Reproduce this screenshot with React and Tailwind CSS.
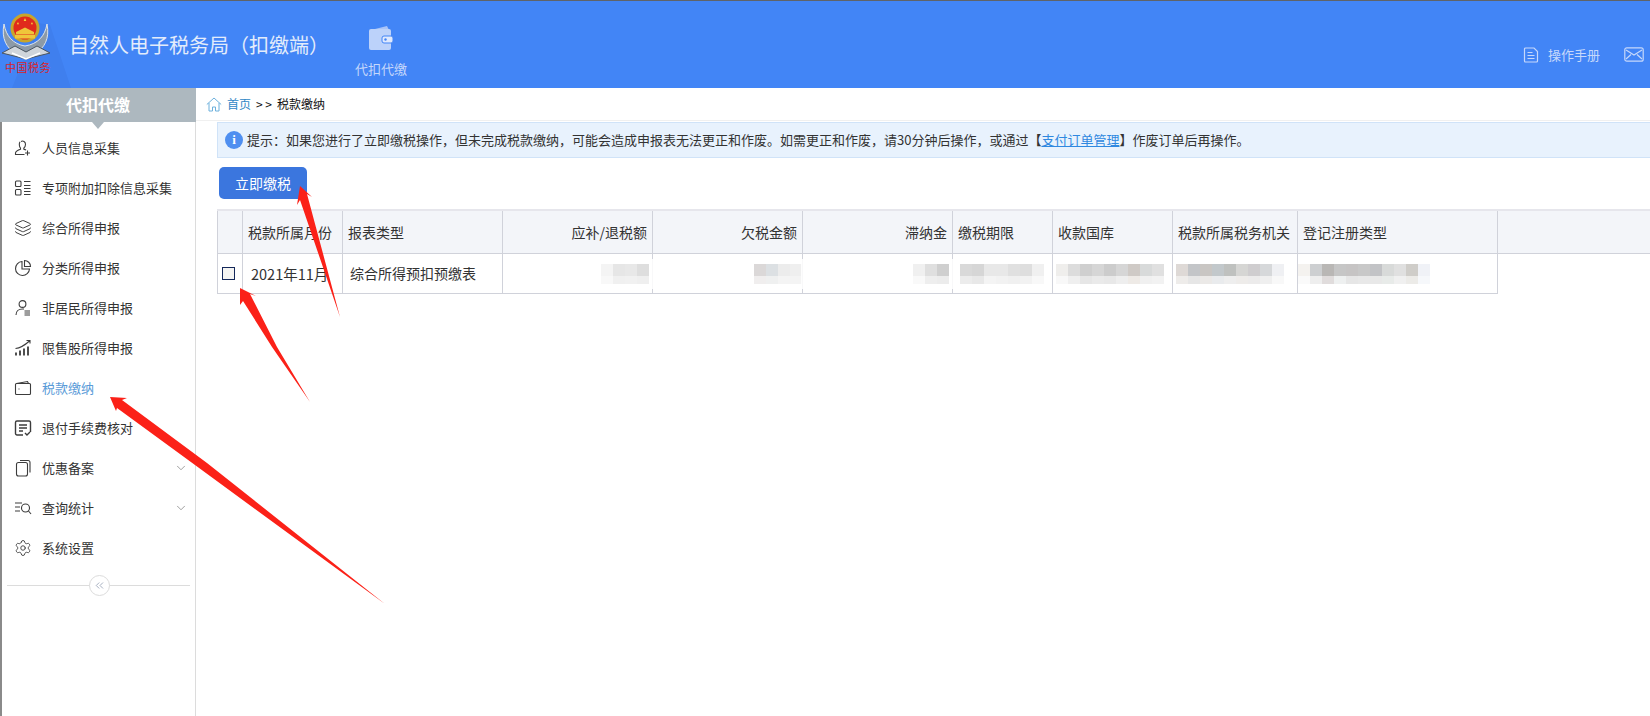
import React from 'react';
import { ChevronDown, ChevronsLeft, Settings, Layers } from 'lucide-react';

const ic = { width: 18, height: 18, viewBox: '0 0 18 18', fill: 'none', stroke: '#3c3c3c', strokeWidth: 1.1 };

const UserAdd = () => (
  <svg {...ic}>
    <path d="M7 2.500c2-1.200 4.500 0 4.500 2.800 0 1.600-.7 3-1.700 3.800v1c1 .3 1.700.6 2.200 1M6 2.800C5 4 5 7.500 6.500 9.100v1.200c-2.500.8-4.500 1.800-5 3.500v1.700h9" />
    <path d="M13.500 11.500v5M11 14h5" />
  </svg>
);
const ListGrid = () => (
  <svg {...ic}>
    <rect x="1.500" y="2" width="5.500" height="5.500" rx="1" />
    <rect x="1.500" y="10.500" width="5.500" height="5.500" rx="1" />
    <path d="M10 2.500h6.500M10 6.500h6.500M10 9.500h6.500M10 12.500h6.500M10 15.500h6.500" />
  </svg>
);
const Pie = () => (
  <svg {...ic}>
    <path d="M8 2.500a7 7 0 1 0 7.500 7.500H8z" />
    <path d="M10.500 1.500a6 6 0 0 1 6 6h-6z" />
  </svg>
);
const UserList = () => (
  <svg {...ic}>
    <circle cx="8.500" cy="5" r="3.400" />
    <path d="M2 16c0-3.500 2.500-6 6.500-6h1.500M10.500 12h5.500M10.500 14h5.500M10.500 16h5.500" />
  </svg>
);
const Bars = () => (
  <svg {...ic}>
    <path d="M2 16.500v-3M6 16.500v-5M10 16.500v-7M14 16.500v-9" strokeWidth="1.800" />
    <path d="M1.500 9.500C6 9 11 6 15.500 2M12.500 1.500h3.500v3" />
  </svg>
);
const Wallet = () => (
  <svg {...ic}>
    <path d="M2.500 4.500l11-2 1 2" />
    <rect x="1.500" y="4.500" width="15" height="11" rx="1" />
    <path d="M4.500 10h1" />
  </svg>
);
const Refund = () => (
  <svg {...ic}>
    <path d="M9 16H3a1.500 1.500 0 0 1-1.500-1.500v-11A1.500 1.500 0 0 1 3 2h12a1.500 1.500 0 0 1 1.500 1.500V13" strokeWidth="1.400" />
    <path d="M5 6h8M5 9h8M5 12h4" strokeWidth="1.400" />
    <path d="M11 14l2 2 3-3" strokeWidth="1.400" />
  </svg>
);
const Pages = () => (
  <svg {...ic}>
    <rect x="2.500" y="3.500" width="11" height="13.500" rx="2" />
    <path d="M6 1.500h8a2 2 0 0 1 2 2v10" />
  </svg>
);
const QueryList = () => (
  <svg {...ic}>
    <path d="M1 4h7M1 8h5M1 12h5" />
    <circle cx="11.500" cy="9" r="4" />
    <path d="M14.500 12l2.500 3" />
  </svg>
);

const menu = [
  { label: '人员信息采集', icon: <UserAdd /> },
  { label: '专项附加扣除信息采集', icon: <ListGrid /> },
  { label: '综合所得申报', icon: <Layers size={18} strokeWidth={1.3} color="#3c3c3c" /> },
  { label: '分类所得申报', icon: <Pie /> },
  { label: '非居民所得申报', icon: <UserList /> },
  { label: '限售股所得申报', icon: <Bars /> },
  { label: '税款缴纳', icon: <Wallet />, active: true },
  { label: '退付手续费核对', icon: <Refund /> },
  { label: '优惠备案', icon: <Pages />, more: true },
  { label: '查询统计', icon: <QueryList />, more: true },
  { label: '系统设置', icon: <Settings size={18} strokeWidth={1.2} color="#3c3c3c" /> },
];

const Logo = () => (
  <div className="relative w-[62px] h-[87px] shrink-0">
    {/* darker wedge behind the badge */}
    <svg className="absolute left-0 top-0" width="74" height="87" viewBox="0 0 74 87">
      <path d="M38 22L50 24 71 87H12z" fill="#3f7fee" />
    </svg>
    <svg className="absolute left-[1px] top-[11px]" width="50" height="50" viewBox="0 0 50 50">
      <path d="M3 12C0 27 6 36 14 41l10 6 11-6c8-5 14-14 11-29-2 12-9 20-22 22C12 32 5 24 3 12z" fill="#8c9aa8" stroke="#dfe5ea" strokeWidth="1" />
      <path d="M1 41l13-7 11 6 11-6 13 7-24 6z" fill="#cfd5db" stroke="#4a5560" strokeWidth="1" />
      <path d="M11 41l14 6 14-6" fill="none" stroke="#fff" strokeWidth="1.600" />
      <circle cx="24" cy="16" r="14.500" fill="#c9a52a" />
      <circle cx="24" cy="16" r="11.500" fill="#e02a1c" />
      <path d="M24 6l1.300 3h-2.600zM17 10l1 2.200h-2.200zM31 10l1 2.200h-2.200z" fill="#f7d23e" />
      <path d="M15 20l9-4.500 9 4.500v2.500H15z" fill="#efc53a" />
      <rect x="14" y="23" width="20" height="3.500" fill="#efc53a" />
    </svg>
    <span className="absolute left-[5px] top-[59px] text-[11px] leading-[14px] tracking-[0.5px] text-[#d8232a] whitespace-nowrap">中国税务</span>
  </div>
);

const Mosaic = ({ rows }) => (
  <div className="inline-flex flex-col shrink-0">
    <div className="flex h-[12px]">
      {rows[0].map((c, j) => (
        <span key={j} className="w-[12px] h-[12px]" style={{ backgroundColor: c }} />
      ))}
    </div>
    <div className="flex h-[8px]">
      {rows[1].map((c, j) => (
        <span key={j} className="w-[12px] h-[8px]" style={{ backgroundColor: c }} />
      ))}
    </div>
  </div>
);

const columns = [
  { label: '', w: 'w-[25px]' },
  { label: '税款所属月份', w: 'w-[100px]' },
  { label: '报表类型', w: 'w-[160px]' },
  { label: '应补/退税额', w: 'w-[150px]', right: true },
  { label: '欠税金额', w: 'w-[150px]', right: true },
  { label: '滞纳金', w: 'w-[150px]', right: true },
  { label: '缴税期限', w: 'w-[100px]' },
  { label: '收款国库', w: 'w-[120px]' },
  { label: '税款所属税务机关', w: 'w-[125px]' },
  { label: '登记注册类型', w: 'w-[200px]' },
];

const blurA = [['#f4f4f4', '#e6e6e6', '#e8e8e8', '#dedede'], ['#f8f8f8', '#f0f0f0', '#f1f1f1', '#efefef']];
const blurB = [['#dbd8d8', '#dce0e3', '#ececec', '#efefef'], ['#f0eeee', '#eff0f0', '#f4f4f4', '#f4f4f4']];
const blurC = [['#f0f0f0', '#dfdfdf', '#cfcfcf'], ['#f9f9f9', '#eeeeee', '#ececec']];
const blurD = [['#d9d9d9', '#d6d6d6', '#e8e8e8', '#e8e8e8', '#e0e0e0', '#dedede', '#f0f0f0'], ['#ececec', '#e8e8e8', '#f4f4f4', '#f2f2f2', '#f0f0f0', '#f2f2f2', '#f8f8f8']];
const blurE = [['#efeeec', '#dcdcdc', '#cfcfcf', '#d6d6d6', '#cccccc', '#d6d6d6', '#cfcac6', '#d8dada', '#e0e0e0'], ['#f8f8f8', '#efefef', '#e6e6e6', '#eaeaea', '#e8e8e8', '#eeeeee', '#eeeae6', '#f0f0f0', '#f2f2f2']];
const blurF = [['#ded9d6', '#c3c5c8', '#c9c6c3', '#c2c8cb', '#bfc1bf', '#d6d6d4', '#cfcdcf', '#d6d8da', '#eff0f3'], ['#eeecea', '#e6e6e6', '#ebe9e7', '#e9ebed', '#eeeeee', '#eeecea', '#ecebeb', '#efefef', '#f8f8f8']];
const blurG = [['#f4f2ef', '#cdcfd1', '#b9b7b5', '#c6c6c6', '#c6c4c4', '#c8c8c8', '#c2c3c6', '#d8dad9', '#e0e0e0', '#cfcdc9', '#f0f2f7'], ['#fafafa', '#eeeeee', '#e0dcdc', '#eef0f0', '#e6e6e6', '#e8e8e8', '#e8e8e8', '#e8ebe9', '#f0f0f0', '#ecebe8', '#f6f8fb']];

// redaction smear that washes out the column rule behind the blurred values
const Smear = () => <span className="absolute -left-[2px] top-[5px] w-[4px] h-[30px] bg-white/85" />;

const Arrow = ({ points }) => <polygon points={points} fill="#fb2118" />;

const App = () => {
  return (
    <div className="relative w-[1650px] h-[716px] overflow-hidden bg-white flex flex-col font-['Noto_Sans_CJK_SC','Noto_Sans',sans-serif] text-[13px] text-[#333]">
      {/* Top bar */}
      <header className="h-[88px] shrink-0 bg-[#4285f6] border-t border-[#5f6368] flex">
        <Logo />
        <h1 className="ml-[7px] mt-[30px] text-[20px] leading-[28px] text-[#e3ecfb] font-normal whitespace-nowrap">自然人电子税务局（扣缴端）</h1>
        <div className="ml-[26px] mt-[24px] w-[52px] flex flex-col items-center">
          <svg width="26" height="26" viewBox="0 0 26 26">
            <path d="M3 5l16-4 2 4z" fill="#a9c4f8" />
            <rect x="1" y="4" width="22" height="21" rx="2" fill="#bcd2fa" />
            <rect x="14" y="11" width="11" height="7" rx="2" fill="#dfe9fd" stroke="#4285f6" />
            <circle cx="17.500" cy="14.500" r="1.200" fill="#4285f6" />
          </svg>
          <span className="mt-[9px] text-[13px] leading-[18px] text-[#c6d8fb] whitespace-nowrap">代扣代缴</span>
        </div>
        <div className="ml-auto mt-[45px] flex items-start">
          <svg width="16" height="16" viewBox="0 0 16 16" fill="none" stroke="#c6d8fb" strokeWidth="1.200" className="mt-[1px]">
            <path d="M1.500 2a1 1 0 0 1 1-1H11l3.500 3.500V14a1 1 0 0 1-1 1h-11a1 1 0 0 1-1-1z" />
            <path d="M4.500 5.500h5M4.500 8.500h7M4.500 11.500h7" />
          </svg>
          <span className="ml-[9px] text-[13px] leading-[18px] text-[#c6d8fb] whitespace-nowrap">操作手册</span>
          <svg width="20" height="15" viewBox="0 0 20 15" fill="none" stroke="#c6d8fb" strokeWidth="1.200" className="ml-[24px] mr-[6px] mt-[1px]">
            <rect x="0.800" y="0.800" width="18.400" height="13.400" rx="2" />
            <path d="M2 3l8 5 8-5M2 12l5-4.500M18 12l-5-4.500" />
          </svg>
        </div>
      </header>

      <div className="flex-1 flex min-h-0">
        {/* Sidebar */}
        <aside className="w-[196px] shrink-0 border-l-2 border-r border-l-[#8a8a8a] border-r-[#dcdcdc] flex flex-col">
          <div className="relative -ml-[2px] -mr-px h-[34px] bg-[#adb8bf] text-center text-[16px] leading-[33px] font-bold text-white">
            代扣代缴
            <span className="absolute left-[92px] top-[34px] border-x-[6px] border-t-[7px] border-x-transparent border-t-[#adb8bf]" />
          </div>
          <nav className="pt-[6px]">
            {menu.map((item) => (
              <div key={item.label} className="h-[40px] flex items-center pl-[12px] pr-[7px]">
                <span className="w-[18px] flex justify-center">{item.icon}</span>
                <span className={`ml-[10px] whitespace-nowrap ${item.active ? 'text-[#5a9bd8]' : 'text-[#333]'}`}>{item.label}</span>
                {item.more && <ChevronDown size={14} strokeWidth={1.2} color="#777" className="ml-auto" />}
              </div>
            ))}
          </nav>
          <div className="relative mt-[17px] mx-[5px] border-t border-[#dcdcdc]">
            <span className="absolute left-[82px] -top-[11px] w-[21px] h-[21px] rounded-full border border-[#dcdcdc] bg-white flex items-center justify-center">
              <ChevronsLeft size={13} strokeWidth={1.4} color="#8b97ad" />
            </span>
          </div>
        </aside>

        {/* Main */}
        <main className="flex-1 min-w-0">
          <div className="h-[33px] flex items-center pl-[10px] border-b border-[#f0f0f0] text-[12px] whitespace-nowrap">
            <svg width="16" height="15" viewBox="0 0 16 15" fill="none" stroke="#6db0dc" strokeWidth="1">
              <path d="M0.800 7.500L8 1l7.200 6.500M3 6v8h3.500v-4h3v4H13V6" />
            </svg>
            <span className="ml-[5px] text-[#2f88c6]">首页</span>
            <span className="ml-[5px] text-[#111]">&gt; &gt;</span>
            <span className="ml-[5px] text-[#111]">税款缴纳</span>
          </div>
          <div className="ml-[21px] mt-px h-[36px] bg-[#e8f2fd] border-y border-l border-[#d0e3f8] flex items-center pl-[7px] whitespace-nowrap text-[13px]">
            <span className="w-[18px] h-[18px] rounded-full bg-[#4f8ff0] text-white flex items-center justify-center text-[13px] font-bold font-['Liberation_Serif',serif]">i</span>
            <span className="ml-[4px] text-[#333]">
              提示：如果您进行了立即缴税操作，但未完成税款缴纳，可能会造成申报表无法更正和作废。如需更正和作废，请30分钟后操作，或通过【<span className="text-[#2f88e0] underline">支付订单管理</span>】作废订单后再操作。
            </span>
          </div>
          <button className="block ml-[23px] mt-[9px] w-[88px] h-[32px] rounded-[5px] bg-[#3b76de] text-white text-[14px]">立即缴税</button>

          <div className="ml-[21px] mt-[10px] text-[14px]">
            <div className="flex h-[45px] bg-[#f3f5f9] border-t-2 border-b border-t-[#e6e6ec] border-b-[#d0d2da]">
              {columns.map((c) => (
                <div key={c.label} className={`${c.w} shrink-0 border-l border-[#d0d2da] flex items-center px-[5px] whitespace-nowrap overflow-hidden ${c.right ? 'justify-end' : ''}`}>{c.label}</div>
              ))}
              <div className="flex-1 border-l border-[#d0d2da]" />
            </div>
            <div className="flex h-[40px] w-[1281px] border-b border-r border-[#d0d2da]">
              <div className="w-[25px] border-l border-[#d0d2da] flex items-center pl-[4px]">
                <span className="w-[13px] h-[13px] border border-[#14285a] bg-[#f4f4f2]" />
              </div>
              <div className="w-[100px] border-l border-[#d0d2da] flex items-center pl-[8px] text-[14.500px] whitespace-nowrap">2021年11月</div>
              <div className="w-[160px] border-l border-[#d0d2da] flex items-center pl-[7px] whitespace-nowrap">综合所得预扣预缴表</div>
              <div className="w-[150px] border-l border-[#d0d2da] flex items-center justify-end pr-[3px]"><Mosaic rows={blurA} /></div>
              <div className="relative w-[150px] border-l border-[#d0d2da] flex items-center justify-end"><Smear /><Mosaic rows={blurB} /></div>
              <div className="relative w-[150px] border-l border-[#d0d2da] flex items-center justify-end pr-[3px]"><Smear /><Mosaic rows={blurC} /></div>
              <div className="relative w-[100px] border-l border-[#d0d2da] flex items-center pl-[7px]"><Smear /><Mosaic rows={blurD} /></div>
              <div className="relative w-[120px] border-l border-[#d0d2da] flex items-center overflow-hidden pl-[3px]"><Smear /><Mosaic rows={blurE} /></div>
              <div className="relative w-[125px] border-l border-[#d0d2da] flex items-center overflow-hidden pl-[3px]"><Mosaic rows={blurF} /></div>
              <div className="flex-1 border-l border-[#d0d2da] flex items-center"><Mosaic rows={blurG} /></div>
            </div>
          </div>
        </main>
      </div>

      {/* Red annotation arrows drawn on top of the screenshot */}
      <svg className="absolute inset-0 pointer-events-none" width="1650" height="716">
        <Arrow points="300,186 312,197 307,194 340,317 300,200 297,205" />
        <Arrow points="240,288 256,296 250,294 277,347 310,402 272,347 243,301 240,305" />
        <Arrow points="110,397 127,398 122,400 207,463 385,604 195,465 117,408 116,411" />
      </svg>
    </div>
  );
};

export default App;
